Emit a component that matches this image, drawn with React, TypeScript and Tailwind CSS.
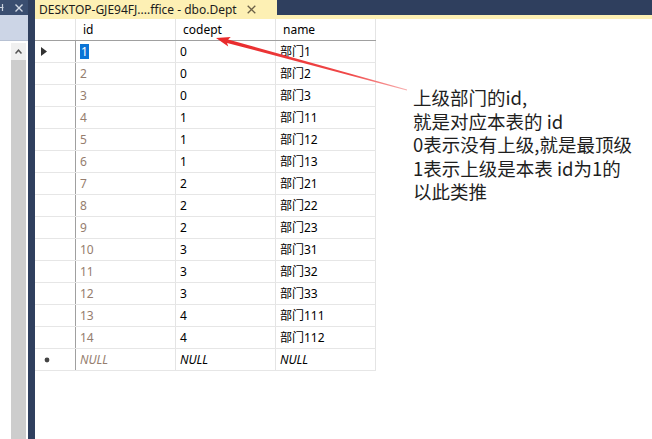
const rows: [string, string, string][] = [
  ["1", "0", "部门1"],
  ["2", "0", "部门2"],
  ["3", "0", "部门3"],
  ["4", "1", "部门11"],
  ["5", "1", "部门12"],
  ["6", "1", "部门13"],
  ["7", "2", "部门21"],
  ["8", "2", "部门22"],
  ["9", "2", "部门23"],
  ["10", "3", "部门31"],
  ["11", "3", "部门32"],
  ["12", "3", "部门33"],
  ["13", "4", "部门111"],
  ["14", "4", "部门112"],
];

const notes = [
  "上级部门的id,",
  "就是对应本表的 id",
  "0表示没有上级,就是最顶级",
  "1表示上级是本表 id为1的",
  "以此类推",
];

export default function App() {
  return (
    <div className="relative flex h-[439px] w-[652px] overflow-hidden bg-white font-['Noto_Sans','Noto_Sans_CJK_SC',sans-serif] text-[12px] text-black">

      {/* Left tool window */}
      <div className="flex w-[28px] flex-col">
        <div className="relative h-[15px] bg-[#3a4e70]">
          {/* pin, cut at the left edge */}
          <svg className="absolute left-0 top-[3px]" width="4" height="9" viewBox="0 0 4 9">
            <path d="M0 4.5 H3.5 M2.5 1 V8" stroke="#c9d1de" strokeWidth="1.2" />
          </svg>
          <svg className="absolute left-[15px] top-[4px]" width="8" height="8" viewBox="0 0 8 8">
            <path d="M0.5 0.5 L7.5 7.5 M7.5 0.5 L0.5 7.5" stroke="#d2d9e4" strokeWidth="1.4" />
          </svg>
        </div>
        <div className="h-[26px] border-b border-[#b7c1d3] bg-[#ccd5e6]" />
        <div className="flex flex-1 pt-[2px]">
          <div className="w-[11px]" />
          <div className="flex w-[15px] flex-col bg-[#cdcdcd]">
            <div className="flex h-[17px] items-center justify-center bg-[#f0f0f0]">
              <svg width="7" height="5" viewBox="0 0 7 5">
                <path d="M0.5 4.5 L3.5 1.2 L6.5 4.5" fill="none" stroke="#555" strokeWidth="1.5" />
              </svg>
            </div>
          </div>
        </div>
      </div>

      {/* Divider */}
      <div className="w-[7px] bg-[#2f3f5e]" />

      {/* Document */}
      <div className="flex flex-1 flex-col">
        <div className="flex h-[19px]">
          <div className="flex w-[242px] items-center bg-[#fdf0b4] pl-[4px] text-[12px] text-[#1c1c1c]">
            <span className="whitespace-nowrap">DESKTOP-GJE94FJ....ffice - dbo.Dept</span>
            <svg className="ml-[10px]" width="9" height="9" viewBox="0 0 9 9">
              <path d="M0.7 0.7 L8.3 8.3 M8.3 0.7 L0.7 8.3" stroke="#6b6047" strokeWidth="1.3" />
            </svg>
          </div>
          <div className="flex flex-1 flex-col">
            <div className="h-[15px] bg-[#2f3f5e]" />
            <div className="h-[4px] bg-[#fdf0b4]" />
          </div>
        </div>

        <div className="flex flex-1">
          {/* Grid */}
          <div className="flex w-[341px] flex-col">
            <div className="flex h-[22px] border-b border-[#a0a0a0]">
              <div className="w-[41px] border-r border-[#e4e4e4]" />
              <div className="flex w-[100px] items-center border-r border-[#e4e4e4] pl-[7px]">id</div>
              <div className="flex w-[100px] items-center border-r border-[#e4e4e4] pl-[7px]">codept</div>
              <div className="flex w-[100px] items-center border-r border-[#e4e4e4] pl-[7px]">name</div>
            </div>
            {rows.map((r, i) => (
              <div key={r[0]} className="flex h-[22px] border-b border-[#e6e6e6]">
                <div className="flex w-[41px] items-center border-r border-[#a0a0a0] pl-[6px]">
                  {i === 0 && (
                    <svg width="6" height="9" viewBox="0 0 6 9">
                      <path d="M0 0 L6 4.5 L0 9 Z" fill="#333" />
                    </svg>
                  )}
                </div>
                <div className="flex w-[100px] items-center border-r border-[#e4e4e4] pl-[4px] text-[#957d6e]">
                  {i === 0 ? (
                    <span className="bg-[#0a74d6] px-[1px] leading-[15px] text-white">{r[0]}</span>
                  ) : (
                    r[0]
                  )}
                </div>
                <div className="flex w-[100px] items-center border-r border-[#e4e4e4] pl-[4px]">{r[1]}</div>
                <div className="flex w-[100px] items-center border-r border-[#e4e4e4] pl-[4px]">{r[2]}</div>
              </div>
            ))}
            <div className="flex h-[22px] border-b border-[#e6e6e6] italic">
              <div className="flex w-[41px] items-center border-r border-[#a0a0a0] pl-[9px]">
                <svg width="6" height="6" viewBox="0 0 6 6">
                  <circle cx="3" cy="3" r="2.4" fill="#444" />
                </svg>
              </div>
              <div className="flex w-[100px] items-center border-r border-[#e4e4e4] pl-[4px] text-[#957d6e]">NULL</div>
              <div className="flex w-[100px] items-center border-r border-[#e4e4e4] pl-[4px]">NULL</div>
              <div className="flex w-[100px] items-center border-r border-[#e4e4e4] pl-[4px]">NULL</div>
            </div>
          </div>

          {/* Annotation */}
          <div className="ml-[37px] mt-[67px] font-['Noto_Sans_CJK_SC',sans-serif] text-[18.5px] leading-[23.5px] text-[#1e1e1e]">
            {notes.map((n) => (
              <div key={n} className="whitespace-pre">{n}</div>
            ))}
          </div>
        </div>
      </div>

      {/* Arrow */}
      <svg className="pointer-events-none absolute left-0 top-0" width="652" height="439">
        <defs>
          <linearGradient id="arrowFade" x1="216" y1="38" x2="407" y2="90" gradientUnits="userSpaceOnUse">
            <stop offset="0" stopColor="#e8282a" />
            <stop offset="0.7" stopColor="#f04848" />
            <stop offset="1" stopColor="#f8b0b0" />
          </linearGradient>
        </defs>
        <polygon
          points="216,38 230.8,36.9 228.1,39.5 407.1,89.6 406.9,90.4 227.1,42.9 228.2,46.5"
          fill="url(#arrowFade)"
        />
      </svg>
    </div>
  );
}
